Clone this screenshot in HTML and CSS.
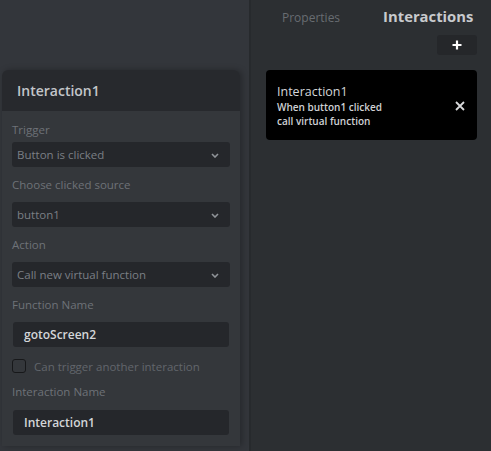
FILE: index.html
```html
<!DOCTYPE html>
<html>
<head>
<meta charset="utf-8">
<link rel="stylesheet" href="styles.css">
</head>
<body>
<div class="app">
  <div class="left">
    <div class="card">
      <div class="card-head">Interaction1</div>
      <div class="card-body">
        <div class="label first">Trigger</div>
        <div class="select s-first"><span>Button is clicked</span><svg class="chev" width="8" height="5" viewBox="0 0 8 5"><path d="M1 1l3 3 3-3" fill="none" stroke="#8f9398" stroke-width="1.6"/></svg></div>
        <div class="label">Choose clicked source</div>
        <div class="select"><span>button1</span><svg class="chev" width="8" height="5" viewBox="0 0 8 5"><path d="M1 1l3 3 3-3" fill="none" stroke="#8f9398" stroke-width="1.6"/></svg></div>
        <div class="label">Action</div>
        <div class="select"><span>Call new virtual function</span><svg class="chev" width="8" height="5" viewBox="0 0 8 5"><path d="M1 1l3 3 3-3" fill="none" stroke="#8f9398" stroke-width="1.6"/></svg></div>
        <div class="label">Function Name</div>
        <div class="input">gotoScreen2</div>
        <div class="check"><span class="box"></span><span>Can trigger another interaction</span></div>
        <div class="label">Interaction Name</div>
        <div class="input last">Interaction1</div>
      </div>
    </div>
  </div>
  <div class="divider"></div>
  <div class="right">
    <div class="tabs">
      <span class="tab">Properties</span>
      <span class="tab active">Interactions</span>
    </div>
    <div class="add-row"><div class="add"><svg width="10" height="10" viewBox="0 0 10 10"><path d="M5 0.5v9M0.5 5h9" stroke="#fff" stroke-width="2.2"/></svg></div></div>
    <div class="item">
      <div class="item-text">
        <div class="item-title">Interaction1</div>
        <div class="item-sub">When button1 clicked</div>
        <div class="item-sub">call virtual function</div>
      </div>
      <svg class="close" width="10" height="10" viewBox="0 0 10 10"><path d="M1 1l8 8M9 1l-8 8" stroke="#d8d9db" stroke-width="1.8"/></svg>
    </div>
  </div>
</div>
</body>
</html>
```

FILE: styles.css
```css
* { box-sizing: border-box; }
html, body { margin: 0; padding: 0; }
body {
  width: 491px;
  height: 451px;
  overflow: hidden;
  font-family: "Open Sans", "Noto Sans", sans-serif;
  background: #2c2f32;
}
.app {
  display: flex;
  height: 451px;
}
.left {
  width: 249px;
  background: #33363b;
  padding: 70px 0 0 2px;
}
.card {
  width: 238px;
  height: 376px;
  border-radius: 6px 6px 0 0;
  box-shadow: 2px 0 6px rgba(0,0,0,0.28);
  overflow: hidden;
}
.card-head {
  height: 41px;
  background: #27292d;
  color: #c3c6ca;
  font-size: 14px;
  font-weight: 600;
  padding: 11px 0 0 15px;
}
.card-body {
  background: #34373b;
  height: 335px;
  padding: 11px 10px 0 10px;
}
.label {
  color: #6e7278;
  font-size: 11.5px;
  line-height: 15px;
  height: 15px;
  margin-top: 10px;
}
.label.first { margin-top: 0; }
.select {
  margin-top: 10px;
  height: 25px;
  width: 218px;
  background: #25272b;
  border-radius: 3px;
  display: flex;
  align-items: center;
  justify-content: space-between;
  padding: 0 11px 0 5px;
  color: #7b7f85;
  font-size: 11.5px;
}
.select.s-first { margin-top: 5px; }
.select .chev { margin-top: 1px; }
.input {
  margin: 10px 0 0 1px;
  height: 25px;
  width: 216px;
  background: #25272b;
  border-radius: 3px;
  color: #d4d6d9;
  font-size: 12px;
  font-weight: 600;
  line-height: 25px;
  padding-left: 11px;
}
.input.last { margin-top: 11px; }
.check {
  display: flex;
  align-items: center;
  margin-top: 12px;
  color: #62666c;
  font-size: 11.5px;
  height: 14px;
}
.check .box {
  width: 14px;
  height: 14px;
  border: 1.5px solid #17181a;
  border-radius: 3px;
  margin-right: 8px;
}
.check + .label { margin-top: 11px; }
.divider {
  width: 2px;
  background: #272a2d;
}
.right {
  flex: 1;
  padding: 0 14px 0 15px;
}
.tabs {
  display: flex;
  align-items: baseline;
  height: 32px;
  padding-top: 6px;
}
.tab {
  color: #686c71;
  font-size: 12px;
  margin-left: 16px;
}
.tab.active {
  color: #c8cacd;
  font-size: 14.8px;
  font-weight: 700;
  margin-left: 43px;
}
.add-row {
  display: flex;
  justify-content: flex-end;
  padding-top: 3px;
}
.add {
  width: 40px;
  height: 20px;
  background: #25272a;
  border-radius: 3px;
  display: flex;
  align-items: center;
  justify-content: center;
}
.item {
  margin-top: 15px;
  height: 70px;
  background: #000;
  border-radius: 4px;
  display: flex;
  align-items: center;
  justify-content: space-between;
  padding: 0 12px 0 11px;
}
.item-text { padding-top: 1px; }
.item-title {
  color: #d4d6d9;
  font-size: 12.5px;
  line-height: 16px;
}
.item-sub {
  color: #cfd1d4;
  font-size: 10px;
  font-weight: 600;
  line-height: 14px;
}
.close { margin-top: 1px; }
```
